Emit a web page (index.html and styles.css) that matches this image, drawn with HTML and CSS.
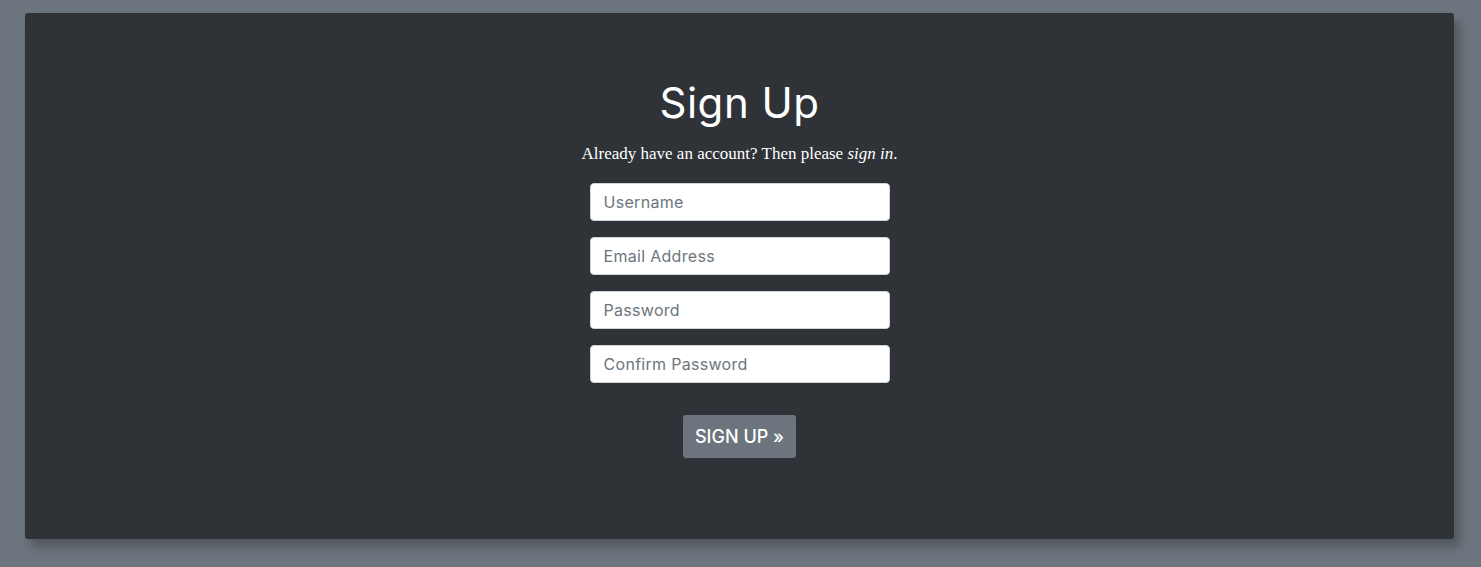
FILE: index.html
```html
<!DOCTYPE html>
<html lang="en">
<head>
<meta charset="utf-8">
<title>Sign Up</title>
<link rel="stylesheet" href="styles.css">
</head>
<body>
<main class="card">
  <h1 class="title">Sign Up</h1>
  <p class="lead">Already have an account? Then please <a class="link" href="#">sign in</a>.</p>
  <form class="form">
    <input class="field" type="text" placeholder="Username">
    <input class="field" type="email" placeholder="Email Address">
    <input class="field" type="password" placeholder="Password">
    <input class="field" type="password" placeholder="Confirm Password">
    <button class="btn" type="button">SIGN UP &raquo;</button>
  </form>
</main>
</body>
</html>
```
FILE: styles.css
```css
* { box-sizing: border-box; }
html, body { height: 100%; }
body {
  margin: 0;
  background: #6c757d;
  padding: 13px 27px 28px 25px;
  font-family: "Inter", "Noto Sans", sans-serif;
}
.card {
  background: #2f3338;
  border-radius: 3px;
  height: 526px;
  box-shadow: 6px 8px 10px rgba(0,0,0,0.25);
  display: flex;
  flex-direction: column;
  align-items: center;
  padding-top: 70px;
}
.title {
  margin: 0;
  color: #fff;
  font-weight: 400;
  font-size: 42px;
  line-height: 40px;
  letter-spacing: 0.5px;
}
.lead {
  margin: 19px 0 0;
  color: #fff;
  font-family: "Liberation Serif", "DejaVu Serif", serif;
  font-size: 17px;
  line-height: 24px;
}
.link {
  color: #fff;
  font-style: italic;
  text-decoration: none;
}
.form {
  margin-top: 17px;
  display: flex;
  flex-direction: column;
  align-items: center;
  gap: 16px;
}
.field {
  width: 300px;
  height: 38px;
  border: 1px solid #ced4da;
  border-radius: 4px;
  background: #fff;
  padding: 0 13px;
  font-family: "Inter", "Noto Sans", sans-serif;
  font-size: 16px;
  letter-spacing: 0.3px;
  color: #495057;
}
.field::placeholder { color: #6c757d; }
.btn {
  margin-top: 16px;
  width: 113px;
  height: 43px;
  border: 0;
  border-radius: 3px;
  background: #6c757d;
  color: #fff;
  font-family: "Inter", "Noto Sans", sans-serif;
  font-size: 18px;
  font-weight: 500;
}
```
